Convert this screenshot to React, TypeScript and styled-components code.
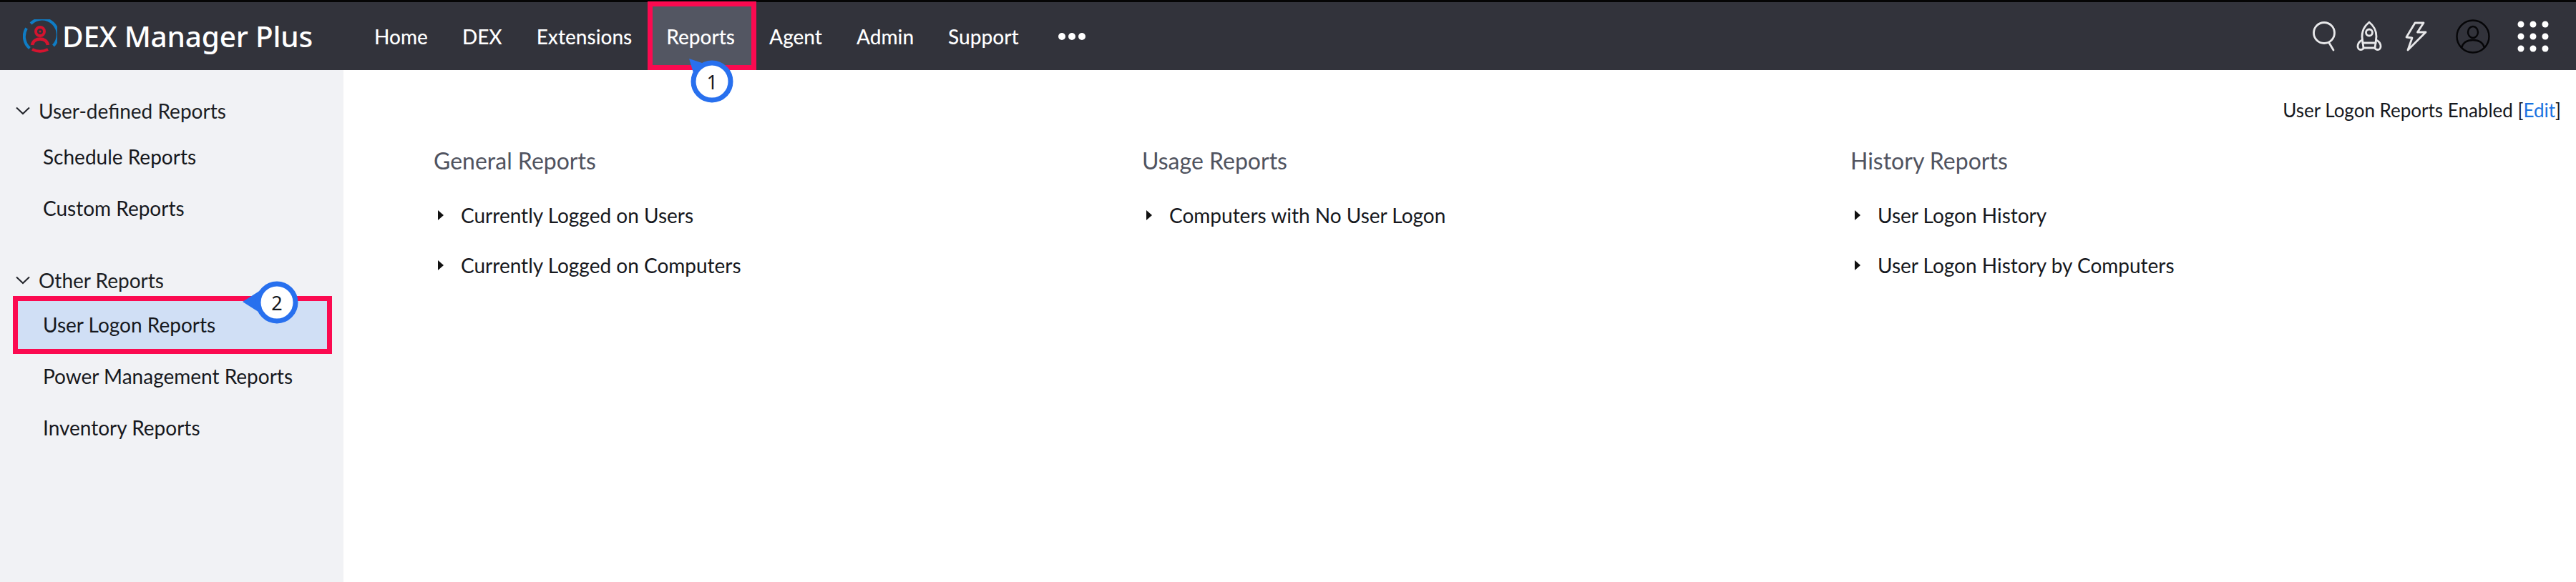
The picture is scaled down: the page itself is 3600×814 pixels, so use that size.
import React from "react";
import styled, { createGlobalStyle } from "styled-components";

const Global = createGlobalStyle`
  html, body { margin: 0; padding: 0; background: #fff; }
  body { font-family: Lato, "Noto Sans", sans-serif; color: #16181d; }
  * { box-sizing: border-box; }
`;

const Page = styled.div`
  display: flex;
  flex-direction: column;
  height: 100vh;
  overflow: hidden;
`;

const Header = styled.header`
  flex: 0 0 98px;
  display: flex;
  align-items: center;
  background: #32333b;
  border-top: 3px solid #050505;
`;

const Brand = styled.div`
  flex: 0 0 499px;
  display: flex;
  align-items: center;
  gap: 7px;
  padding-left: 32px;
`;

const BrandName = styled.span`
  font-family: "Noto Sans", sans-serif;
  font-size: 40.5px;
  font-weight: 500;
  color: #fff;
  letter-spacing: -0.2px;
  white-space: nowrap;
`;

const Nav = styled.nav`
  display: flex;
  align-items: stretch;
  height: 100%;
`;

const NavItem = styled.div<{ $active?: boolean }>`
  position: relative;
  display: flex;
  align-items: center;
  padding: 0 24px;
  font-size: 28px;
  font-weight: 500;
  color: #fff;
  background: ${(p) => (p.$active ? "#535662" : "transparent")};
`;

const Dots = styled.div`
  display: flex;
  align-items: center;
  gap: 4px;
  margin-left: 31px;
`;

const Dot = styled.span`
  width: 10px;
  height: 10px;
  border-radius: 50%;
  background: #fff;
`;

const HeaderIcons = styled.div`
  margin-left: auto;
  display: flex;
  align-items: center;
  padding-right: 30px;
`;

const IconSlot = styled.div<{ $w: number }>`
  flex: 0 0 ${(p) => p.$w}px;
  display: flex;
  align-items: center;
  justify-content: center;
`;

const Body = styled.div`
  flex: 1;
  display: flex;
  min-height: 0;
`;

const Sidebar = styled.aside`
  flex: 0 0 480px;
  background: #f1f2f5;
  padding-top: 21px;
`;

const GroupTitle = styled.div`
  display: flex;
  align-items: center;
  gap: 12px;
  height: 72px;
  padding-left: 22px;
  font-size: 28px;
  color: #1c1e24;
`;

const Group = styled.div`
  margin-bottom: 29px;
`;

const SideItem = styled.div<{ $active?: boolean }>`
  position: relative;
  display: flex;
  align-items: center;
  height: 72px;
  margin: 0 16px 0 18px;
  padding-left: 42px;
  font-size: 28px;
  color: #16181d;
  background: ${(p) => (p.$active ? "#d0dff5" : "transparent")};
`;

const SideItems = styled.div<{ $lift: number }>`
  margin-top: -${(p) => p.$lift}px;
`;

const Highlight = styled.div`
  position: absolute;
  border: 7px solid #fb0a50;
  pointer-events: none;
`;

const NavHighlight = styled(Highlight)`
  left: -2px;
  right: -6px;
  top: -1px;
  bottom: 0;
`;

const SideHighlight = styled(Highlight)`
  left: 0;
  right: 0;
  top: -4px;
  bottom: -5px;
`;

const Callout = styled.div<{ $x: number; $y: number }>`
  position: absolute;
  left: ${(p) => p.$x}px;
  top: ${(p) => p.$y}px;
  width: 72px;
  height: 72px;
  z-index: 2;
`;

const CalloutNumber = styled.span`
  position: absolute;
  left: 0;
  top: 0;
  width: 100%;
  height: 100%;
  display: flex;
  align-items: center;
  justify-content: center;
  font-family: "Noto Sans", sans-serif;
  font-size: 27px;
  font-weight: 400;
  color: #16181d;
`;

const Main = styled.main`
  position: relative;
  flex: 1;
  padding: 38px 21px 0 126px;
`;

const Status = styled.div`
  text-align: right;
  font-size: 26px;
  line-height: 36px;
  color: #16181d;
`;

const EditLink = styled.span`
  color: #1a73e0;
`;

const Columns = styled.div`
  display: grid;
  grid-template-columns: repeat(3, 990px);
  margin-top: 33px;
`;

const Column = styled.section`
  display: flex;
  flex-direction: column;
`;

const ColumnTitle = styled.h3`
  margin: 0 0 21px;
  font-size: 32px;
  line-height: 40px;
  font-weight: 400;
  color: #50535f;
`;

const ReportRow = styled.div`
  display: flex;
  align-items: center;
  height: 70px;
  padding-left: 6px;
  font-size: 28px;
  color: #16181d;
`;

const Caret = styled.span`
  width: 0;
  height: 0;
  margin-right: 24px;
  border-left: 8px solid #111;
  border-top: 7px solid transparent;
  border-bottom: 7px solid transparent;
`;

const Logo = () => (
  <svg width="48" height="48" viewBox="0 0 48 48" fill="none">
    <path d="M9.5 40.5 A22 22 0 0 1 5 12.5" stroke="#0f7cc4" strokeWidth="4" />
    <path d="M11 6 A22 22 0 0 1 42.5 37" stroke="#0f7cc4" strokeWidth="4" />
    <circle cx="24" cy="17" r="6" stroke="#d4142f" strokeWidth="4" />
    <circle cx="24" cy="17" r="1.5" fill="#d4142f" />
    <path d="M13 36 C14 30 19 27.5 24 27.5 C29 27.5 34 30 35 36" stroke="#d4142f" strokeWidth="4.5" />
    <path d="M13 42 Q24 47.5 35 42" stroke="#d4142f" strokeWidth="4" />
  </svg>
);

const Chevron = () => (
  <svg width="20" height="12" viewBox="0 0 20 12" fill="none">
    <path d="M1 1.5 L10 10 L19 1.5" stroke="#22242a" strokeWidth="2" />
  </svg>
);

const SearchIcon = () => (
  <svg width="36" height="44" viewBox="0 0 36 44" fill="none" stroke="#e8e8ea" strokeWidth="2.8" strokeLinecap="round">
    <circle cx="18" cy="17" r="14.5" />
    <path d="M25 31 L31 41" />
  </svg>
);

const RocketIcon = () => (
  <svg width="36" height="44" viewBox="0 0 36 44" fill="none" stroke="#e8e8ea" strokeWidth="2.8" strokeLinecap="round" strokeLinejoin="round">
    <path d="M9 31 L8 22 C8 13 13 6 18 2 C23 6 28 13 28 22 L27 31 Z" />
    <circle cx="18" cy="16.5" r="4.5" />
    <path d="M8 27 C4 29 2 33 2 36 C2 39 4 40.5 6 40.5 C8 40.5 10 39.5 10 38 L9 31" />
    <path d="M28 27 C32 29 34 33 34 36 C34 39 32 40.5 30 40.5 C28 40.5 26 39.5 26 38 L27 31" />
    <path d="M10 38 L26 38" />
  </svg>
);

const BoltIcon = () => (
  <svg width="32" height="42" viewBox="0 0 32 42" fill="none" stroke="#e8e8ea" strokeWidth="2.8" strokeLinejoin="round">
    <path d="M15 2 L27 2 L18.5 15 L30 15 L5 40 L11 23 L3 22 Z" />
  </svg>
);

const UserIcon = () => (
  <svg width="48" height="48" viewBox="0 0 48 48" fill="none" stroke="#060608" strokeWidth="2.4">
    <circle cx="24" cy="24" r="22.5" />
    <ellipse cx="24" cy="18" rx="7" ry="8" />
    <path d="M8 40 C10 32 16 29 24 29 C32 29 38 32 40 40" />
  </svg>
);

const AppGrid = () => (
  <svg width="46" height="46" viewBox="0 0 46 46" fill="#fff">
    {[6, 23, 40].flatMap((y) =>
      [6, 23, 40].map((x) => <circle key={`${x}-${y}`} cx={x} cy={y} r="4.5" />),
    )}
  </svg>
);

const CalloutShape = ({ tail }: { tail: string }) => (
  <svg width="72" height="72" viewBox="0 0 72 72" overflow="visible">
    <path d={tail} fill="#2870ee" />
    <circle cx="36" cy="36" r="26" fill="#fff" stroke="#2870ee" strokeWidth="7" />
  </svg>
);

const navItems = ["Home", "DEX", "Extensions", "Reports", "Agent", "Admin", "Support"];

const columns = [
  { title: "General Reports", rows: ["Currently Logged on Users", "Currently Logged on Computers"] },
  { title: "Usage Reports", rows: ["Computers with No User Logon"] },
  { title: "History Reports", rows: ["User Logon History", "User Logon History by Computers"] },
];

export default function App() {
  return (
    <Page>
      <Global />
      <Header>
        <Brand>
          <Logo />
          <BrandName>DEX Manager Plus</BrandName>
        </Brand>
        <Nav>
          {navItems.map((item) => (
            <NavItem key={item} $active={item === "Reports"}>
              {item}
              {item === "Reports" && (
                <>
                  <NavHighlight />
                  <Callout $x={52} $y={75}>
                    <CalloutShape tail="M4 4 L40 16 L16 44 Z" />
                    <CalloutNumber>1</CalloutNumber>
                  </Callout>
                </>
              )}
            </NavItem>
          ))}
          <Dots>
            <Dot />
            <Dot />
            <Dot />
          </Dots>
        </Nav>
        <HeaderIcons>
          <IconSlot $w={48}><SearchIcon /></IconSlot>
          <IconSlot $w={78}><RocketIcon /></IconSlot>
          <IconSlot $w={52}><BoltIcon /></IconSlot>
          <IconSlot $w={108}><UserIcon /></IconSlot>
          <IconSlot $w={60}><AppGrid /></IconSlot>
        </HeaderIcons>
      </Header>
      <Body>
        <Sidebar>
          <Group>
            <GroupTitle>
              <Chevron />
              User-defined Reports
            </GroupTitle>
            <SideItems $lift={8}>
              <SideItem>Schedule Reports</SideItem>
              <SideItem>Custom Reports</SideItem>
            </SideItems>
          </Group>
          <Group>
            <GroupTitle>
              <Chevron />
              Other Reports
            </GroupTitle>
            <SideItems $lift={10}>
              <SideItem $active>
                User Logon Reports
                <SideHighlight />
                <Callout $x={333} $y={-31}>
                  <CalloutShape tail="M-12 35 L24 12 L24 58 Z" />
                  <CalloutNumber>2</CalloutNumber>
                </Callout>
              </SideItem>
              <SideItem>Power Management Reports</SideItem>
              <SideItem>Inventory Reports</SideItem>
            </SideItems>
          </Group>
        </Sidebar>
        <Main>
          <Status>
            User Logon Reports Enabled [<EditLink>Edit</EditLink>]
          </Status>
          <Columns>
            {columns.map((col) => (
              <Column key={col.title}>
                <ColumnTitle>{col.title}</ColumnTitle>
                {col.rows.map((row) => (
                  <ReportRow key={row}>
                    <Caret />
                    {row}
                  </ReportRow>
                ))}
              </Column>
            ))}
          </Columns>
        </Main>
      </Body>
    </Page>
  );
}
